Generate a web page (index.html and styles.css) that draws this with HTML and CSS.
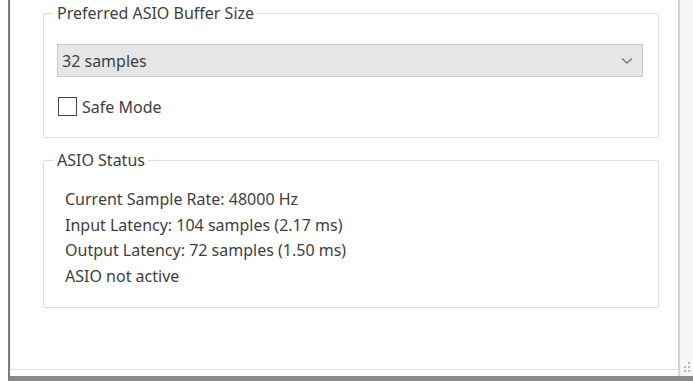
FILE: index.html
```html
<!DOCTYPE html>
<html lang="en">
<head>
  <meta charset="UTF-8">
  <title>ASIO Settings</title>
  <link rel="stylesheet" href="styles.css">
</head>
<body>
  <div class="frame">
    <div class="panel">
      <fieldset class="group">
        <legend>Preferred ASIO Buffer Size</legend>
        <div class="combo">
          <span>32 samples</span>
          <svg class="chevron" width="12" height="8" viewBox="0 0 12 8"><path d="M1 1.5 L6 6 L11 1.5" fill="none" stroke="#7a7a7a" stroke-width="1.4"/></svg>
        </div>
        <label class="check-row">
          <span class="check-box"></span>
          <span>Safe Mode</span>
        </label>
      </fieldset>

      <fieldset class="group status-group">
        <legend>ASIO Status</legend>
        <div class="status-lines">
          <div>Current Sample Rate: 48000 Hz</div>
          <div>Input Latency: 104 samples (2.17 ms)</div>
          <div>Output Latency: 72 samples (1.50 ms)</div>
          <div>ASIO not active</div>
        </div>
      </fieldset>
    </div>
    <div class="side">
      <svg class="grip" width="10" height="14" viewBox="0 0 10 14"><g fill="#b5b5b5"><rect x="7" y="2" width="2" height="2"/><rect x="7" y="6" width="2" height="2"/><rect x="3" y="6" width="2" height="2"/><rect x="7" y="10" width="2" height="2"/><rect x="3" y="10" width="2" height="2"/></g></svg>
    </div>
  </div>
</body>
</html>
```

FILE: styles.css
```css
body {
  margin: 0;
  padding: 0;
  background-color: #fff;
  font-family: 'Noto Sans', 'Liberation Sans', sans-serif;
  font-size: 16px;
  color: #3e3e3e;
}

.frame {
  display: flex;
  height: 381px;
  margin-left: 8px;
  box-sizing: border-box;
  border-left: 2px solid #7c7c7c;
  border-bottom: 5px solid #8c8888;
}

.panel {
  flex: 1;
  padding: 4px 19px 0 32px;
  border-left: 1px solid #ececec;
  border-bottom: 1px solid #dedede;
  margin-bottom: 6px;
}

.group {
  margin: 0 0 13px 0;
  padding: 22px 15px 21px 13px;
  border: 1px solid #dddddd;
  border-radius: 2px;
}

.group legend {
  padding: 0 3px;
  margin-left: -3px;
  line-height: 18px;
  color: #404040;
}

.combo {
  display: flex;
  justify-content: space-between;
  align-items: center;
  height: 33px;
  box-sizing: border-box;
  padding: 0 9px 0 4px;
  background-color: #e6e6e6;
  border: 1px solid #c9c9c9;
}

.check-row {
  display: flex;
  align-items: center;
  gap: 5px;
  margin-top: 20px;
  margin-left: 1px;
  height: 19px;
}

.check-box {
  width: 17px;
  height: 17px;
  border: 1px solid #454545;
  background-color: #fff;
}

.status-group {
  padding-top: 18px;
  padding-bottom: 18px;
}

.status-lines {
  padding-left: 8px;
  line-height: 25.6px;
}

.side {
  width: 13px;
  position: relative;
  border-left: 2px solid #d4d4d4;
  background-color: #f6f6f6;
}

.grip {
  position: absolute;
  right: 2px;
  bottom: 2px;
}
```
